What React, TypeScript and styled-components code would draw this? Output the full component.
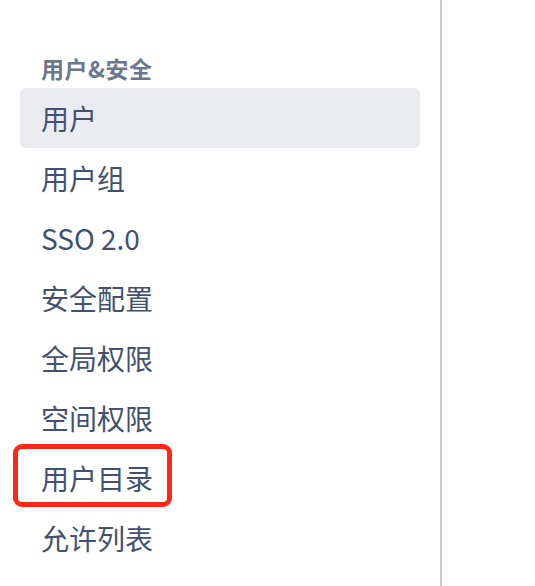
import React from "react";
import styled, { createGlobalStyle } from "styled-components";

const Global = createGlobalStyle`
  html, body { margin: 0; padding: 0; background: #ffffff; }
  body { font-family: "Noto Sans CJK SC", "Noto Sans", sans-serif; }
`;

const Page = styled.div`
  display: flex;
  width: 535px;
  height: 586px;
  overflow: hidden;
`;

const Sidebar = styled.nav`
  position: relative;
  width: 442px;
  flex: none;
  box-sizing: border-box;
  padding: 56px 20px 0 20px;
  border-right: 2px solid #cbcbcb;
`;

const SectionTitle = styled.div`
  padding-left: 21px;
  height: 24px;
  line-height: 24px;
  margin-bottom: 8px;
  font-size: 23px;
  letter-spacing: 0.5px;
  font-weight: 700;
  color: #6b778c;
`;

const List = styled.ul`
  list-style: none;
  margin: 0;
  padding: 0;
`;

const Item = styled.li<{ $active?: boolean }>`
  position: relative;
  display: flex;
  align-items: center;
  height: 60px;
  padding-left: 21px;
  border-radius: 6px;
  font-size: 28px;
  color: #42526e;
  background: ${(p) => (p.$active ? "#ebecf0" : "transparent")};
`;

const Highlight = styled.span`
  position: absolute;
  left: -7px;
  top: -4px;
  width: 159px;
  height: 63px;
  box-sizing: border-box;
  border: 5px solid #ff2618;
  border-radius: 9px;
  pointer-events: none;
`;

const Main = styled.main`
  flex: 1;
`;

const items = ["用户", "用户组", "SSO 2.0", "安全配置", "全局权限", "空间权限", "用户目录", "允许列表"];

export default function App() {
  return (
    <Page>
      <Global />
      <Sidebar>
        <SectionTitle>用户&amp;安全</SectionTitle>
        <List>
          {items.map((t, i) => (
            <Item key={t} $active={i === 0}>
              {t}
              {t === "用户目录" && <Highlight />}
            </Item>
          ))}
        </List>
      </Sidebar>
      <Main />
    </Page>
  );
}
